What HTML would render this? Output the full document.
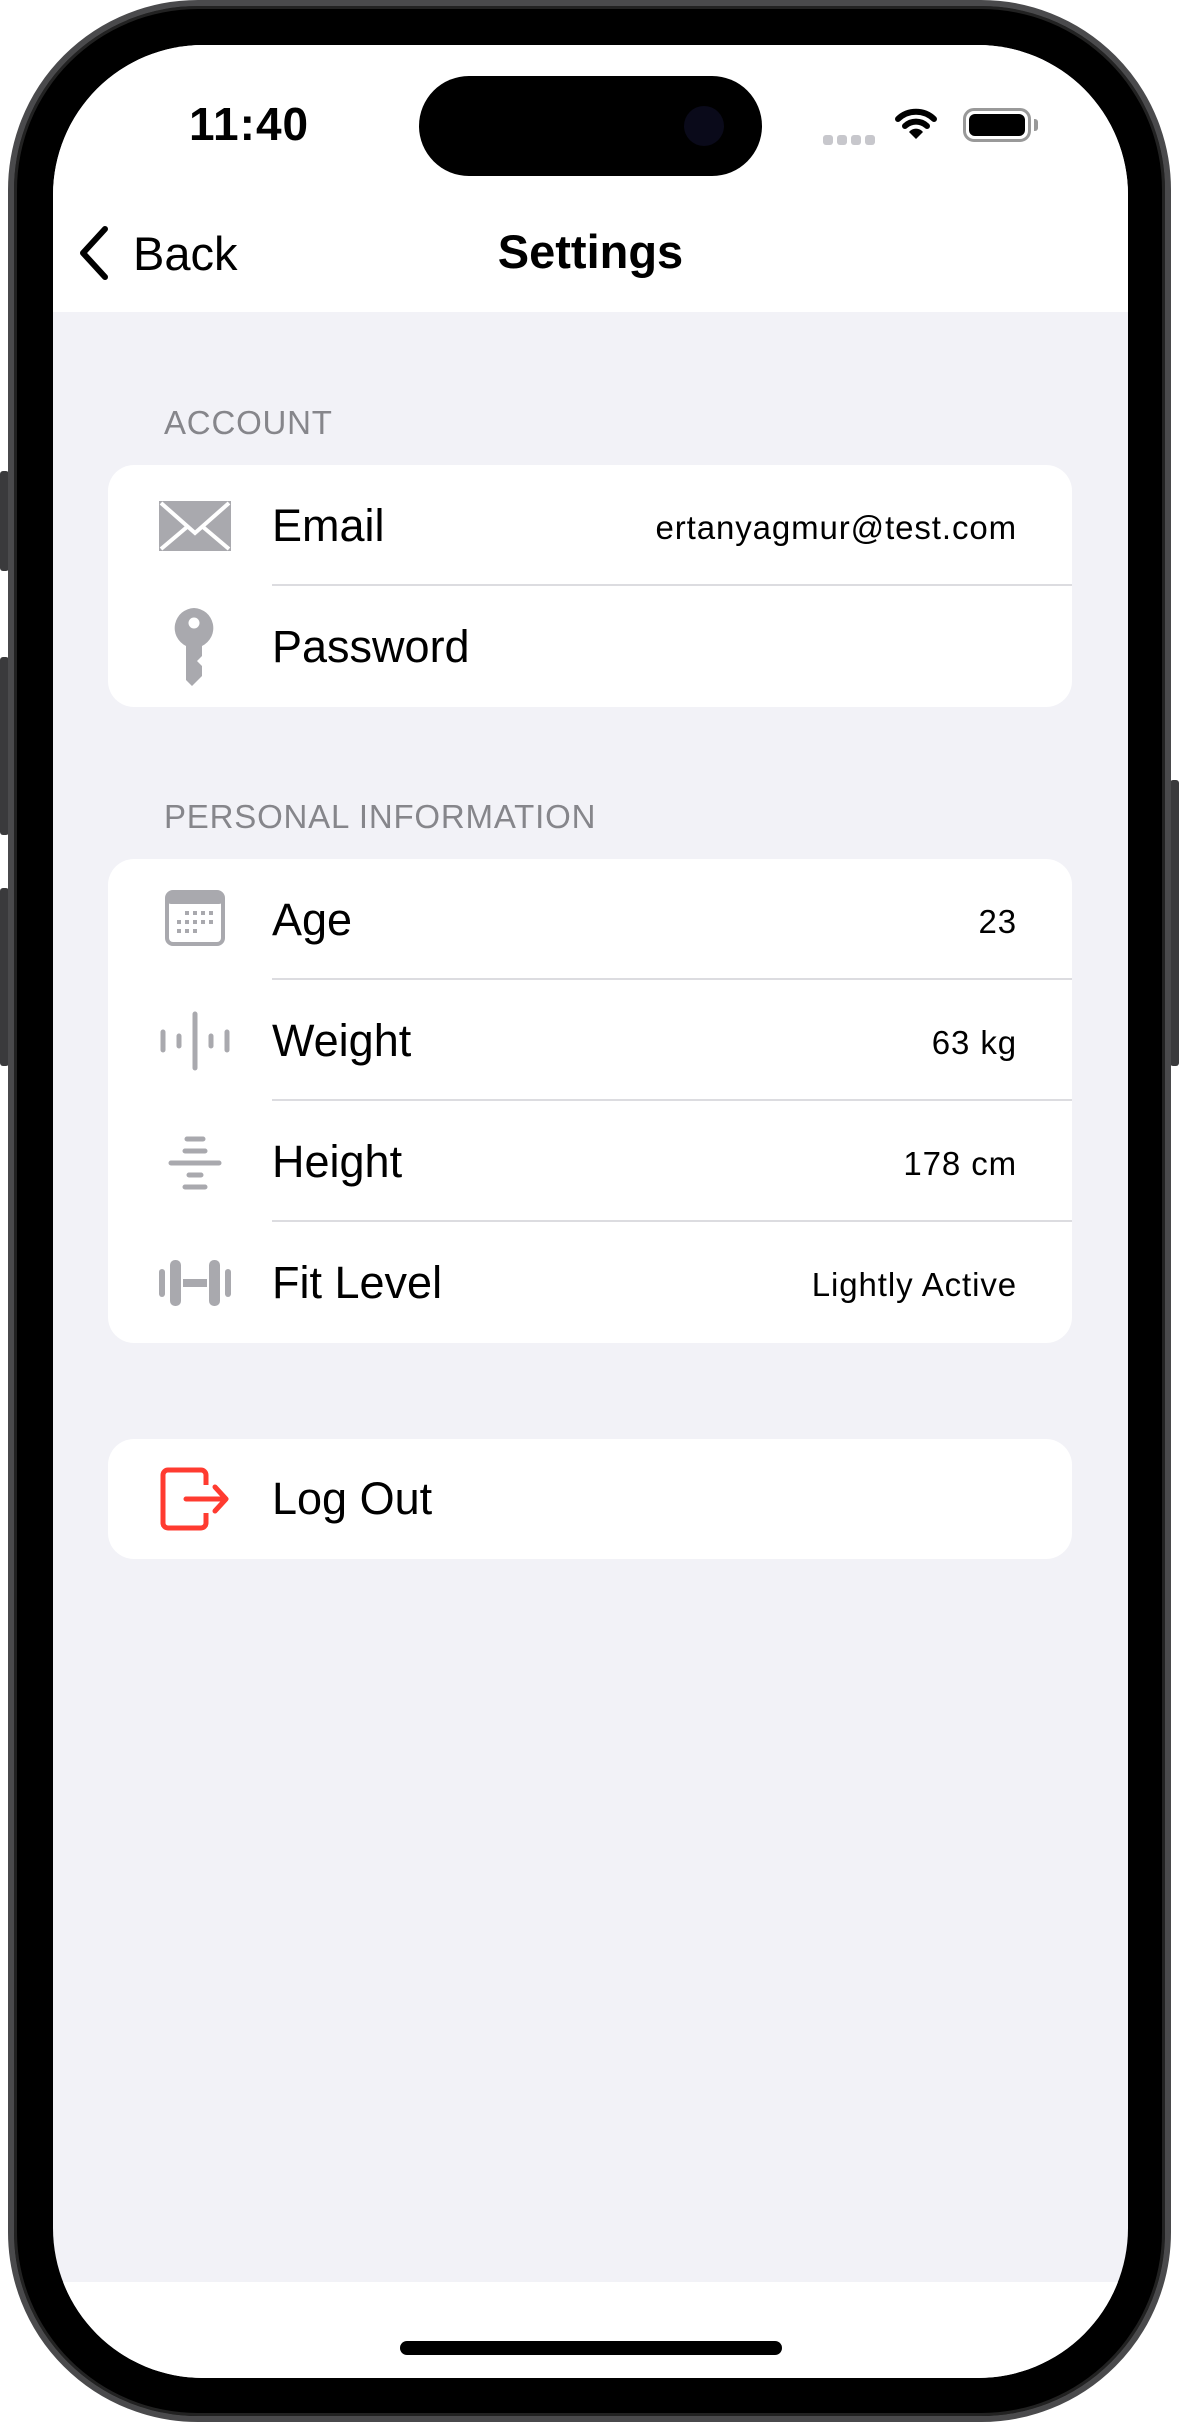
<!DOCTYPE html>
<html><head><meta charset="utf-8"><style>
*{margin:0;padding:0;box-sizing:border-box}
body{width:1179px;height:2422px;background:#fff;position:relative;overflow:hidden;font-family:"Liberation Sans",sans-serif}
.btn{position:absolute;background:#3a3a3c;border-radius:3px}
.frame{position:absolute;left:8px;top:0;width:1163px;height:2422px;border-radius:190px;background:#000;border:6px solid #4a4a4c;box-shadow:inset 0 0 0 3px #222}
.screen{position:absolute;left:53px;top:45px;width:1075px;height:2333px;border-radius:150px;background:#f2f2f7;overflow:hidden}
.top{position:absolute;left:0;top:0;width:100%;height:267px;background:#fff}
.bot{position:absolute;left:0;top:2237px;width:100%;height:120px;background:#fff}
.island{position:absolute;left:366px;top:31px;width:343px;height:100px;border-radius:50px;background:#000}
.abs{position:absolute}
.hdr{position:absolute;left:111px;font-size:33px;color:#86868b;letter-spacing:.8px}
.card{position:absolute;left:55px;width:964px;background:#fff;border-radius:26px}
.row{position:relative;height:121px}
.lbl{position:absolute;left:164px;top:0;line-height:121px;font-size:45px;color:#000}
.val{position:absolute;right:55px;top:0;line-height:125px;font-size:33px;color:#000;letter-spacing:.9px}
.sep{position:absolute;left:164px;right:0;bottom:0;height:2px;background:#dcdce0}
.ic{position:absolute;left:51px;top:30px;width:72px;height:62px}
</style></head><body>
<div class="btn" style="left:0;top:471px;width:9px;height:100px"></div>
<div class="btn" style="left:0;top:657px;width:9px;height:178px"></div>
<div class="btn" style="left:0;top:888px;width:9px;height:178px"></div>
<div class="btn" style="left:1170px;top:780px;width:9px;height:286px"></div>
<div class="frame"></div>
<div class="screen">
 <div class="top"></div>
 <div class="bot"></div>
 <div class="island"><div class="abs" style="left:265px;top:30px;width:40px;height:40px;border-radius:20px;background:#0a0a1a"></div></div>
 <div class="abs" style="left:136px;top:52px;font-size:46px;font-weight:bold;letter-spacing:1px">11:40</div>
 <div class="abs" style="left:770px;top:88px;width:56px;height:14px">
  <svg width="56" height="14"><g fill="#c7c7cc"><rect x="0" y="2" width="10" height="10" rx="3"/><rect x="14" y="2" width="10" height="10" rx="3"/><rect x="28" y="2" width="10" height="10" rx="3"/><rect x="42" y="2" width="10" height="10" rx="3"/></g></svg>
 </div>
 <svg class="abs" style="left:842px;top:62px" width="42" height="34" viewBox="0 0 42 34"><path d="M3 12 A26 26 0 0 1 39 12" stroke="#000" stroke-width="6" fill="none" stroke-linecap="round"/><path d="M10 19 A16 16 0 0 1 32 19" stroke="#000" stroke-width="6" fill="none" stroke-linecap="round"/><path d="M21 32 L14 25 A9 9 0 0 1 28 25Z" fill="#000"/></svg>
 <div class="abs" style="left:910px;top:63px;width:68px;height:34px;border:3px solid #999;border-radius:11px;padding:3px"><div style="width:100%;height:100%;background:#000;border-radius:6px"></div></div>
 <div class="abs" style="left:981px;top:74px;width:4px;height:12px;background:#999;border-radius:0 3px 3px 0"></div>
 <svg class="abs" style="left:24px;top:180px" width="34" height="56" viewBox="0 0 34 56"><path d="M28 4 L6 28 L28 52" stroke="#000" stroke-width="6" fill="none" stroke-linecap="round" stroke-linejoin="round"/></svg>
 <div class="abs" style="left:80px;top:181px;font-size:47px;color:#000">Back</div>
 <div class="abs" style="left:0;width:1075px;text-align:center;top:179px;font-size:47px;font-weight:bold;color:#000">Settings</div>

 <div class="hdr" style="top:359px">ACCOUNT</div>
 <div class="card" style="top:420px">
  <div class="row">
   <svg class="ic" viewBox="0 0 72 62"><rect x="0" y="6" width="72" height="50" fill="#a9a9ae"/><path d="M2 8 L36 38 L70 8" stroke="#fff" stroke-width="4" fill="none"/><path d="M2 54 L28 32 M70 54 L44 32" stroke="#fff" stroke-width="4"/></svg>
   <div class="lbl">Email</div><div class="val">ertanyagmur@test.com</div><div class="sep"></div>
  </div>
  <div class="row">
   <svg class="abs" style="left:64px;top:22px" width="44" height="80" viewBox="0 0 44 80"><path fill="#a9a9ae" d="M22 0 A20 20 0 0 1 30 38 L30 48 L25 53 L30 58 L30 68 L20 78 L14 72 L14 38 A20 20 0 0 1 22 0Z"/><circle cx="22" cy="15" r="5.5" fill="#fff"/></svg>
   <div class="lbl">Password</div>
  </div>
 </div>

 <div class="hdr" style="top:753px">PERSONAL INFORMATION</div>
 <div class="card" style="top:814px">
  <div class="row">
   <svg class="ic" viewBox="0 0 72 62"><rect x="8" y="3" width="56" height="52" rx="6" fill="none" stroke="#a9a9ae" stroke-width="4"/><rect x="8" y="3" width="56" height="12" rx="4" fill="#a9a9ae"/><g fill="#a9a9ae"><rect x="26" y="22" width="4" height="4"/><rect x="34" y="22" width="4" height="4"/><rect x="42" y="22" width="4" height="4"/><rect x="50" y="22" width="4" height="4"/><rect x="18" y="31" width="4" height="4"/><rect x="26" y="31" width="4" height="4"/><rect x="34" y="31" width="4" height="4"/><rect x="42" y="31" width="4" height="4"/><rect x="50" y="31" width="4" height="4"/><rect x="18" y="40" width="4" height="4"/><rect x="26" y="40" width="4" height="4"/><rect x="34" y="40" width="4" height="4"/></g></svg>
   <div class="lbl">Age</div><div class="val">23</div><div class="sep"></div>
  </div>
  <div class="row">
   <svg class="ic" viewBox="0 0 72 62"><g stroke="#a9a9ae" stroke-width="5" stroke-linecap="round"><path d="M4 22 V40 M20 26 V36 M36 4 V58 M52 26 V36 M68 22 V40"/></g></svg>
   <div class="lbl">Weight</div><div class="val">63 kg</div><div class="sep"></div>
  </div>
  <div class="row">
   <svg class="ic" viewBox="0 0 72 62"><g stroke="#a9a9ae" stroke-width="5" stroke-linecap="round"><path d="M28 8 H44 M26 20 H46 M12 32 H60 M30 44 H42 M26 56 H46"/></g></svg>
   <div class="lbl">Height</div><div class="val">178 cm</div><div class="sep"></div>
  </div>
  <div class="row">
   <svg class="ic" viewBox="0 0 72 62"><g fill="#a9a9ae"><rect x="0" y="17" width="6" height="28" rx="3"/><rect x="11" y="8" width="11" height="46" rx="5"/><rect x="24" y="27" width="24" height="8"/><rect x="50" y="8" width="11" height="46" rx="5"/><rect x="66" y="17" width="6" height="28" rx="3"/></g></svg>
   <div class="lbl">Fit Level</div><div class="val">Lightly Active</div>
  </div>
 </div>

 <div class="card" style="top:1394px;height:120px">
  <svg class="abs" style="left:52px;top:28px" width="70" height="64" viewBox="0 0 70 64"><path d="M46 18 V8 A5 5 0 0 0 41 3 H8 A5 5 0 0 0 3 8 V56 A5 5 0 0 0 8 61 H41 A5 5 0 0 0 46 56 V46" stroke="#ff3b30" stroke-width="5" fill="none"/><path d="M26 32 H66 M55 20 L66 32 L55 44" stroke="#ff3b30" stroke-width="5" fill="none" stroke-linecap="round" stroke-linejoin="round"/></svg>
  <div class="lbl" style="line-height:120px">Log Out</div>
 </div>

 <div class="abs" style="left:347px;top:2296px;width:382px;height:14px;border-radius:7px;background:#000"></div>
</div>
</body></html>
